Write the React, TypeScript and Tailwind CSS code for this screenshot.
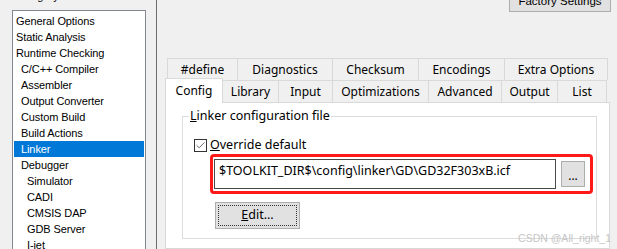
import { Check } from "lucide-react"

const categories = [
  { label: "General Options", level: 0 },
  { label: "Static Analysis", level: 0 },
  { label: "Runtime Checking", level: 0 },
  { label: "C/C++ Compiler", level: 1 },
  { label: "Assembler", level: 1 },
  { label: "Output Converter", level: 1 },
  { label: "Custom Build", level: 1 },
  { label: "Build Actions", level: 1 },
  { label: "Linker", level: 1, active: true },
  { label: "Debugger", level: 1 },
  { label: "Simulator", level: 2 },
  { label: "CADI", level: 2 },
  { label: "CMSIS DAP", level: 2 },
  { label: "GDB Server", level: 2 },
  { label: "I-jet", level: 2 },
]

const backTabs = [
  { label: "#define", w: "w-[70px]" },
  { label: "Diagnostics", w: "w-[95px]" },
  { label: "Checksum", w: "w-[86px]" },
  { label: "Encodings", w: "w-[86px]" },
  { label: "Extra Options", w: "w-[104px]" },
]

const frontTabs = [
  { label: "Library", w: "w-[55px]" },
  { label: "Input", w: "w-[54px]" },
  { label: "Optimizations", w: "w-[96px]" },
  { label: "Advanced", w: "w-[73px]" },
  { label: "Output", w: "w-[56px]" },
  { label: "List", w: "w-[50px]" },
]

const levelPad = ["pl-[2px]", "pl-[7px]", "pl-[13px]"]

export default function App() {
  return (
    <div className="relative flex h-[249px] w-[617px] overflow-hidden bg-[#f0f0f0] font-['Noto_Sans',sans-serif] text-[12px] text-black">
      {/* category tree */}
      <div className="flex w-[156px] shrink-0 flex-col pl-[12px]">
        <div className="mt-[-14px] flex h-[24px] shrink-0 items-end pb-[7px] pl-[2px] font-['Liberation_Sans',sans-serif] text-[11px] leading-[14px]">
          Category:
        </div>
        <div className="w-[134px] flex-1 border border-[#828790] bg-white p-[1px] font-['Liberation_Sans',sans-serif] text-[11px] tracking-[-0.1px]">
          <div className="h-[1px]" />
          {categories.map((c) => (
            <div
              key={c.label}
              className={`flex h-[16px] items-center whitespace-nowrap ${levelPad[c.level]} ${
                c.active ? "bg-[#0078d7] text-white" : ""
              }`}
            >
              {c.label}
            </div>
          ))}
        </div>
      </div>

      <div className="w-px shrink-0 bg-[#6d6d6d]" />

      {/* options pane */}
      <div className="flex flex-1 flex-col pl-[8px] pr-[7px]">
        <div className="flex h-[58px] shrink-0 justify-end">
          <button
            type="button"
            className="mr-[-1px] mt-[-11px] h-[23px] w-[102px] border border-[#adadad] bg-[#e1e1e1] font-['Liberation_Sans',sans-serif] text-[11.5px] leading-[20px]"
          >
            Factory Settings
          </button>
        </div>

        <div className="ml-[2px] flex h-[22px] shrink-0">
          {backTabs.map((t, i) => (
            <div
              key={t.label}
              className={`${t.w} flex items-center justify-center border-l border-t border-[#d9d9d9] ${
                i === backTabs.length - 1 ? "border-r" : ""
              }`}
            >
              {t.label}
            </div>
          ))}
        </div>

        <div className="relative z-10 flex h-[22px] shrink-0 items-end">
          <div className="mb-[-1px] flex h-[25px] w-[58px] items-center justify-center border-l border-r border-t border-[#d9d9d9] bg-white pb-[1px]">
            Config
          </div>
          {frontTabs.map((t, i) => (
            <div
              key={t.label}
              className={`${t.w} flex h-[22px] items-center justify-center border-t border-[#d9d9d9] ${
                i === 0 ? "" : "border-l"
              } ${i === frontTabs.length - 1 ? "border-r" : ""}`}
            >
              {t.label}
            </div>
          ))}
        </div>

        <div className="flex-1 border border-[#d9d9d9] bg-white pl-[16px] pt-[5px]">
          <fieldset className="h-[131px] w-[415px] border border-[#dcdcdc]">
            <legend className="ml-[6px] px-[1px] text-[12.5px] leading-[16px]">
              <span className="underline">L</span>inker configuration file
            </legend>

            <div className="pl-[11px]">
              <div className="mt-[13px] flex items-center gap-[3px]">
                <div className="flex h-[13px] w-[13px] items-center justify-center border border-[#333333] bg-white">
                  <Check className="h-[11px] w-[11px] text-[#333333]" strokeWidth={1.6} />
                </div>
                <span className="text-[12.5px] leading-[16px]">
                  <span className="underline">O</span>verride default
                </span>
              </div>

              <div className="ml-[16px] mt-[1px] flex h-[40px] w-[383px] items-center rounded-[4px] border-[3px] border-[#ff1a1a] pl-[1px]">
                <div className="flex h-[30px] w-[342px] items-start border border-[#4a4a4a] bg-white pl-[4px] pt-[3px] text-[12.5px] leading-[16px]">
                  $TOOLKIT_DIR$\config\linker\GD\GD32F303xB.icf
                </div>
                <button
                  type="button"
                  className="ml-[5px] flex h-[26px] w-[24px] items-end justify-center border border-[#adadad] bg-[#e1e1e1] pb-[4px] text-[12px] leading-[12px]"
                >
                  ...
                </button>
              </div>

              <button
                type="button"
                className="ml-[21px] mt-[8px] h-[27px] w-[85px] border border-[#adadad] bg-[#e1e1e1] p-[2px]"
              >
                <div className="flex h-full w-full items-center justify-center border border-dotted border-[#333333] text-[12.5px]">
                  <span className="underline">E</span>dit...
                </div>
              </button>
            </div>
          </fieldset>
        </div>
      </div>

      <div className="absolute bottom-[5px] right-[6px] font-['Liberation_Sans',sans-serif] text-[10.5px] leading-[12px] text-[#c6c6c6]">
        CSDN @All_right_1
      </div>
    </div>
  )
}
